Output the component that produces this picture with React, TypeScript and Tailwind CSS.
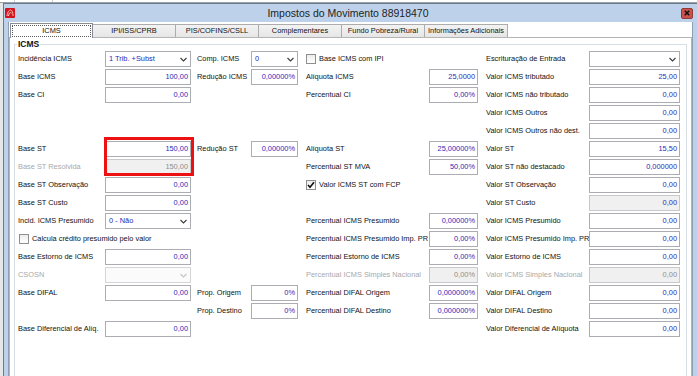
import type { ReactNode } from 'react';

type Mode = 'on' | 'off' | 'ro';
type Cell = { node: ReactNode; span?: boolean } | null;

function Label({ text, off = false, className = '' }: { text: string; off?: boolean; className?: string }) {
  return (
    <div
      className={`flex items-center whitespace-nowrap ${off ? 'text-[#a8a8a8]' : 'text-[#111111]'} ${className}`}
    >
      {text}
    </div>
  );
}

function Field({ value, mode = 'on' }: { value: string; mode?: Mode }) {
  const look =
    mode === 'off'
      ? 'border-[#c8c8c8] bg-[#f0f0f0] text-[#8e8e8e]'
      : mode === 'ro'
        ? 'border-[#c8c8c8] bg-[#f0f0f0] text-[#2a2ab8]'
        : 'border-[#abadb3] bg-white text-[#2a2ab8]';
  return (
    <div className="flex items-center">
      <div className={`flex h-[16px] w-full items-center justify-end border px-[2px] ${look}`}>{value}</div>
    </div>
  );
}

function Chevron({ off = false }: { off?: boolean }) {
  return (
    <svg width="7" height="5" viewBox="0 0 7 5" className="shrink-0">
      <polyline points="0.5,1 3.5,4 6.5,1" fill="none" stroke={off ? '#c4c4c4' : '#3c3c3c'} strokeWidth="1.1" />
    </svg>
  );
}

function Select({ value, off = false }: { value: string; off?: boolean }) {
  return (
    <div className="flex items-center">
      <div
        className={`flex h-[16px] w-full items-center justify-between border pl-[3px] pr-[3px] text-[#2a2ab8] ${
          off ? 'border-[#d6d6d6] bg-[#fbfbfb]' : 'border-[#abadb3] bg-white'
        }`}
      >
        <span>{value}</span>
        <Chevron off={off} />
      </div>
    </div>
  );
}

function Check({ text, checked = false, className = '' }: { text: string; checked?: boolean; className?: string }) {
  return (
    <div className={`flex items-center gap-[3px] whitespace-nowrap text-[#111111] ${className}`}>
      <span className="flex h-[10px] w-[10px] items-center justify-center border border-[#8e8f8f] bg-gradient-to-b from-[#ececec] to-white">
        {checked && (
          <svg width="8" height="8" viewBox="0 0 8 8">
            <polyline points="1,4 3,6.3 7,1.2" fill="none" stroke="#111" strokeWidth="1.6" />
          </svg>
        )}
      </span>
      {text}
    </div>
  );
}

const c = (node: ReactNode, span = false): Cell => ({ node, span });
const L2 = 'pl-[6px]';
const L3 = 'pl-[8px]';

const rows: Cell[][] = [
  [
    c(<Label text="Incidência ICMS" />),
    c(<Select value="1 Trib. +Subst" />),
    c(<Label text="Comp. ICMS" className={L2} />),
    c(<Select value="0" />),
    c(<Check text="Base ICMS com IPI" className={L3} />, true),
    c(<Label text="Escrituração de Entrada" className={L3} />),
    c(<Select value="" />),
  ],
  [
    c(<Label text="Base ICMS" />),
    c(<Field value="100,00" />),
    c(<Label text="Redução ICMS" className={L2} />),
    c(<Field value="0,00000%" />),
    c(<Label text="Alíquota ICMS" className={L3} />),
    c(<Field value="25,0000" />),
    c(<Label text="Valor ICMS tributado" className={L3} />),
    c(<Field value="25,00" />),
  ],
  [
    c(<Label text="Base CI" />),
    c(<Field value="0,00" />),
    null,
    null,
    c(<Label text="Percentual CI" className={L3} />),
    c(<Field value="0,00%" />),
    c(<Label text="Valor ICMS não tributado" className={L3} />),
    c(<Field value="0,00" />),
  ],
  [null, null, null, null, null, null, c(<Label text="Valor ICMS Outros" className={L3} />), c(<Field value="0,00" />)],
  [
    null,
    null,
    null,
    null,
    null,
    null,
    c(<Label text="Valor ICMS Outros não dest." className={L3} />),
    c(<Field value="0,00" />),
  ],
  [
    c(<Label text="Base ST" />),
    c(<Field value="150,00" />),
    c(<Label text="Redução ST" className={L2} />),
    c(<Field value="0,00000%" />),
    c(<Label text="Alíquota ST" className={L3} />),
    c(<Field value="25,00000%" />),
    c(<Label text="Valor ST" className={L3} />),
    c(<Field value="15,50" />),
  ],
  [
    c(<Label text="Base ST Resolvida" off />),
    c(<Field value="150,00" mode="off" />),
    null,
    null,
    c(<Label text="Percentual ST MVA" className={L3} />),
    c(<Field value="50,00%" />),
    c(<Label text="Valor ST não destacado" className={L3} />),
    c(<Field value="0,000000" />),
  ],
  [
    c(<Label text="Base ST Observação" />),
    c(<Field value="0,00" />),
    null,
    null,
    c(<Check text="Valor ICMS ST com FCP" checked className={L3} />, true),
    c(<Label text="Valor ST Observação" className={L3} />),
    c(<Field value="0,00" />),
  ],
  [
    c(<Label text="Base ST Custo" />),
    c(<Field value="0,00" />),
    null,
    null,
    null,
    null,
    c(<Label text="Valor ST Custo" className={L3} />),
    c(<Field value="0,00" mode="ro" />),
  ],
  [
    c(<Label text="Incid. ICMS Presumido" />),
    c(<Select value="0 - Não" />),
    null,
    null,
    c(<Label text="Percentual ICMS Presumido" className={L3} />),
    c(<Field value="0,00000%" />),
    c(<Label text="Valor ICMS Presumido" className={L3} />),
    c(<Field value="0,00" />),
  ],
  [
    c(<Check text="Calcula crédito presumido pelo valor" className="pl-[1px]" />, true),
    null,
    null,
    c(<Label text="Percentual ICMS Presumido Imp. PR" className={L3} />),
    c(<Field value="0,00%" />),
    c(<Label text="Valor ICMS Presumido Imp. PR" className={L3} />),
    c(<Field value="0,00" />),
  ],
  [
    c(<Label text="Base Estorno de ICMS" />),
    c(<Field value="0,00" />),
    null,
    null,
    c(<Label text="Percentual Estorno de ICMS" className={L3} />),
    c(<Field value="0,00%" />),
    c(<Label text="Valor Estorno de ICMS" className={L3} />),
    c(<Field value="0,00" />),
  ],
  [
    c(<Label text="CSOSN" off />),
    c(<Select value="" off />),
    null,
    null,
    c(<Label text="Percentual ICMS Simples Nacional" off className={L3} />),
    c(<Field value="0,00%" mode="off" />),
    c(<Label text="Valor ICMS Simples Nacional" off className={L3} />),
    c(<Field value="0,00" mode="off" />),
  ],
  [
    c(<Label text="Base DIFAL" />),
    c(<Field value="0,00" />),
    c(<Label text="Prop. Origem" className={L2} />),
    c(<Field value="0%" />),
    c(<Label text="Percentual DIFAL Origem" className={L3} />),
    c(<Field value="0,000000%" />),
    c(<Label text="Valor DIFAL Origem" className={L3} />),
    c(<Field value="0,00" />),
  ],
  [
    null,
    null,
    c(<Label text="Prop. Destino" className={L2} />),
    c(<Field value="0%" />),
    c(<Label text="Percentual DIFAL Destino" className={L3} />),
    c(<Field value="0,000000%" />),
    c(<Label text="Valor DIFAL Destino" className={L3} />),
    c(<Field value="0,00" />),
  ],
  [
    c(<Label text="Base Diferencial de Alíq." />),
    c(<Field value="0,00" />),
    null,
    null,
    null,
    null,
    c(<Label text="Valor Diferencial de Alíquota" className={L3} />),
    c(<Field value="0,00" />),
  ],
];

const tabs = ['ICMS', 'IPI/ISS/CPRB', 'PIS/COFINS/CSLL', 'Complementares', 'Fundo Pobreza/Rural', 'Informações Adicionais'];

function AppIcon() {
  return (
    <svg width="10" height="10" viewBox="0 0 10 10">
      <rect x="0" y="0" width="10" height="10" rx="1" fill="#d3141c" />
      <path d="M2 8 C2.5 4, 4 2, 5.5 2 C7 2, 8 4, 8 8" fill="none" stroke="#f7c4c4" strokeWidth="1" />
      <path d="M3.5 8 C4 5, 5 4, 6.5 5" fill="none" stroke="#ffffff" strokeWidth="0.8" />
    </svg>
  );
}

export default function App() {
  return (
    <div className="flex h-[376px] w-[697px] flex-col overflow-hidden bg-white font-['Liberation_Sans',Arial,sans-serif] text-[7.4px] leading-none">
      {/* window behind */}
      <div className="flex h-[3px] shrink-0 border-b border-[#9aa0a6] bg-white">
        <div className="w-[15px] border-r border-[#c8c8c8]" />
        <div className="w-[38px] border-r border-[#c8c8c8]" />
      </div>
      <div className="flex min-h-0 flex-1">
        <div className="w-[3px] shrink-0 bg-[#e4e6e8]" />
        <div className="flex min-w-0 flex-1 flex-col border-l border-t border-[#6b7b8d] bg-[#bdd2ea]">
          {/* title bar */}
          <div className="flex h-[18px] shrink-0 items-center pl-[1px] pr-[4px]">
            <AppIcon />
            <div className="flex-1 text-center text-[10.5px] text-[#1e1e1e]">Impostos do Movimento 88918470</div>
            <div className="flex h-[11px] w-[12px] items-center justify-center rounded-[2px] border border-[#8e3b36] bg-[#c9534c]">
              <svg width="6" height="6" viewBox="0 0 6 6">
                <path d="M0.8 0.8 L5.2 5.2 M5.2 0.8 L0.8 5.2" stroke="#111" strokeWidth="1.6" />
              </svg>
            </div>
          </div>
          {/* client */}
          <div className="mx-[4px] flex min-h-0 flex-1 flex-col border-l border-r border-[#8f9fb2] bg-white">
            <div className="flex h-[15px] shrink-0 items-end pl-[1px] pt-[1px]">
              {tabs.map((t, i) =>
                i === 0 ? (
                  <div
                    key={t}
                    className="relative z-10 -mb-[1px] flex h-[15px] w-[83px] items-center justify-center border border-b-0 border-[#898c95] bg-white p-[1px]"
                  >
                    <div className="flex h-full w-full items-center justify-center border border-dotted border-[#5a5a5a] text-[#111111]">
                      {t}
                    </div>
                  </div>
                ) : (
                  <div
                    key={t}
                    className="-ml-[1px] flex h-[13px] w-[84px] items-center justify-center border border-b-0 border-[#acacac] bg-gradient-to-b from-[#f3f3f3] to-[#e6e6e6] text-[#111111]"
                  >
                    {t}
                  </div>
                ),
              )}
            </div>
            <div className="flex min-h-0 flex-1 flex-col border-l border-t border-r border-[#b4b4b4] px-[4px] pt-[1px]">
              <fieldset className="border border-[#d5dfe5] pb-[60px] pl-[3px] pt-[1px]">
                <legend className="-ml-[1px] px-[1px] text-[8.5px] leading-[10px] font-bold text-[#111111]">ICMS</legend>
                <div className="relative grid grid-cols-[87px_86px_60px_47px_131px_49px_111px_91px] auto-rows-[18px]">
                  {rows.flatMap((row, ri) =>
                    row.map((cell, ci) =>
                      cell === null ? (
                        <div key={`${ri}-${ci}`} />
                      ) : (
                        <div key={`${ri}-${ci}`} className={cell.span ? 'col-span-2 flex' : 'flex'}>
                          <div className="flex flex-1 [&>*]:flex-1">{cell.node}</div>
                        </div>
                      ),
                    ),
                  )}
                  <div className="absolute left-[86px] top-[87px] h-[39px] w-[90px] border-[3px] border-[#ee1111]" />
                </div>
              </fieldset>
            </div>
          </div>
        </div>
      </div>
    </div>
  );
}
